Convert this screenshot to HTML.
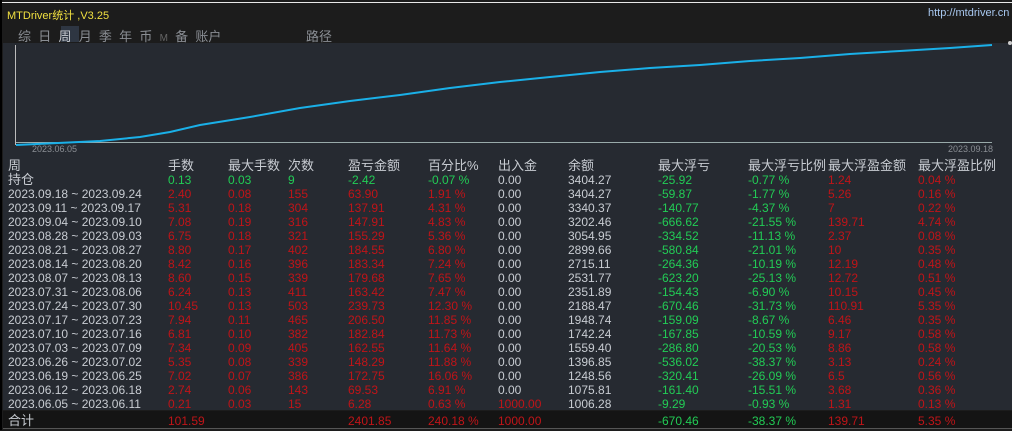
<!DOCTYPE html><html><head><meta charset="utf-8"><style>
body{margin:0;width:1012px;height:430px;background:#1c1c1c;overflow:hidden;font-family:"Liberation Sans","Noto Sans CJK SC",sans-serif;position:relative}
.a{position:absolute;white-space:nowrap}
.t{font-size:12px;line-height:14px;color:#c8ccd2}
.r{color:#c01418}.g{color:#22cc55}.w{color:#c8ccd2}
</style></head><body>
<div class="a" style="left:0;top:2px;width:1012px;height:1px;background:#e8e8e8"></div>
<div class="a" style="left:0;top:0;width:2px;height:430px;background:#000"></div>
<div class="a" style="left:7px;top:7px;font-size:11px;color:#f0e040">MTDriver统计 ,V3.25</div>
<div class="a" style="left:928px;top:7px;font-size:11px;color:#a8c8f0">http://mtdriver.cn</div>
<div class="a" style="left:61px;top:26px;width:18px;height:16px;background:#2e3642"></div>
<div class="a" style="left:18px;top:26px;font-size:13px;color:#8a8e94">综&nbsp; 日&nbsp; <span style="color:#c8ccd2">周</span>&nbsp; 月&nbsp; 季&nbsp; 年&nbsp; 币&nbsp; <span style="font-size:10px;color:#666">M</span>&nbsp; 备&nbsp; 账户</div>
<div class="a" style="left:306px;top:26px;font-size:13px;color:#8a8e94">路径</div>
<div class="a" style="left:3px;top:43px;width:1009px;height:367px;background:#262a31"></div>
<div class="a" style="left:15px;top:45px;width:1px;height:100px;background:#bbb"></div>
<svg class="a" style="left:0;top:0" width="1012" height="160">
<line x1="16" y1="142.5" x2="992" y2="142.5" stroke="#9aa" stroke-width="1"/>
<polyline fill="none" stroke="#1ab0e8" stroke-width="2" points="16,145 100,141 140,137 170,132 200,125 250,117 300,108 350,101 400,95 450,88 500,82 550,77 600,72 650,68 700,65 750,61 800,58 850,54 900,51 950,48 992,45"/>
<circle cx="1010" cy="43" r="2" fill="#ccc"/></svg>
<div class="a" style="left:32px;top:144px;font-size:9px;color:#8a8e94">2023.06.05</div>
<div class="a" style="left:948px;top:144px;font-size:9px;color:#8a8e94">2023.09.18</div>
<div class="a" style="left:3px;top:411px;width:1009px;height:17px;background:#141414"></div>
<div class="a" style="left:3px;top:428px;width:1009px;height:2px;background:#1c1c1c;border-top:1px solid #555"></div>
<div id="tb"></div>
<script>
const C=[8,168,228,288,348,428,498,568,658,748,828,918];
const rows=[
["w","周","手数","最大手数","次数","盈亏金额","百分比%","出入金","余额","最大浮亏","最大浮亏比例","最大浮盈金额","最大浮盈比例"],
["g","持仓","0.13","0.03","9","-2.42","-0.07 %","0.00","3404.27","-25.92","-0.77 %","1.24","0.04 %"],
["r","2023.09.18 ~ 2023.09.24","2.40","0.08","155","63.90","1.91 %","0.00","3404.27","-59.87","-1.77 %","5.26","0.16 %"],
["r","2023.09.11 ~ 2023.09.17","5.31","0.18","304","137.91","4.31 %","0.00","3340.37","-140.77","-4.37 %","7","0.22 %"],
["r","2023.09.04 ~ 2023.09.10","7.08","0.19","316","147.91","4.83 %","0.00","3202.46","-666.62","-21.55 %","139.71","4.74 %"],
["r","2023.08.28 ~ 2023.09.03","6.75","0.18","321","155.29","5.36 %","0.00","3054.95","-334.52","-11.13 %","2.37","0.08 %"],
["r","2023.08.21 ~ 2023.08.27","8.80","0.17","402","184.55","6.80 %","0.00","2899.66","-580.84","-21.01 %","10","0.35 %"],
["r","2023.08.14 ~ 2023.08.20","8.42","0.16","396","183.34","7.24 %","0.00","2715.11","-264.36","-10.19 %","12.19","0.48 %"],
["r","2023.08.07 ~ 2023.08.13","8.60","0.15","339","179.68","7.65 %","0.00","2531.77","-623.20","-25.13 %","12.72","0.51 %"],
["r","2023.07.31 ~ 2023.08.06","6.24","0.13","411","163.42","7.47 %","0.00","2351.89","-154.43","-6.90 %","10.15","0.45 %"],
["r","2023.07.24 ~ 2023.07.30","10.45","0.13","503","239.73","12.30 %","0.00","2188.47","-670.46","-31.73 %","110.91","5.35 %"],
["r","2023.07.17 ~ 2023.07.23","7.94","0.11","465","206.50","11.85 %","0.00","1948.74","-159.09","-8.67 %","6.46","0.35 %"],
["r","2023.07.10 ~ 2023.07.16","6.81","0.10","382","182.84","11.73 %","0.00","1742.24","-167.85","-10.59 %","9.17","0.58 %"],
["r","2023.07.03 ~ 2023.07.09","7.34","0.09","405","162.55","11.64 %","0.00","1559.40","-286.80","-20.53 %","8.86","0.58 %"],
["r","2023.06.26 ~ 2023.07.02","5.35","0.08","339","148.29","11.88 %","0.00","1396.85","-536.02","-38.37 %","3.13","0.24 %"],
["r","2023.06.19 ~ 2023.06.25","7.02","0.07","386","172.75","16.06 %","0.00","1248.56","-320.41","-26.09 %","6.5","0.56 %"],
["r","2023.06.12 ~ 2023.06.18","2.74","0.06","143","69.53","6.91 %","0.00","1075.81","-161.40","-15.51 %","3.68","0.36 %"],
["r","2023.06.05 ~ 2023.06.11","0.21","0.03","15","6.28","0.63 %","1000.00","1006.28","-9.29","-0.93 %","1.31","0.13 %"],
["r","合计","101.59","","","2401.85","240.18 %","1000.00","","-670.46","-38.37 %","139.71","5.35 %"]];
let h="";
rows.forEach((r,i)=>{let y=159+i*14;if(i==rows.length-1)y=414;
for(let j=1;j<r.length;j++){let k=j-1,cl;
if(i==0||k==0)cl="w";
else if(i==1)cl=(k==6||k==7)?"w":(k>=10)?"r":"g";
else{cl=(k==6||k==7)?"w":(k==8||k==9)?"g":"r";if(k==6&&r[j]!="0.00")cl="r";}
let fs=(i==0||(k==0&&(i==1||i==rows.length-1)))?"font-size:13px;":"";
h+=`<div class="a t ${cl}" style="left:${C[k]}px;top:${y}px;${fs}">${r[j]}</div>`;}});
document.getElementById("tb").innerHTML=h;
</script>
</body></html>
